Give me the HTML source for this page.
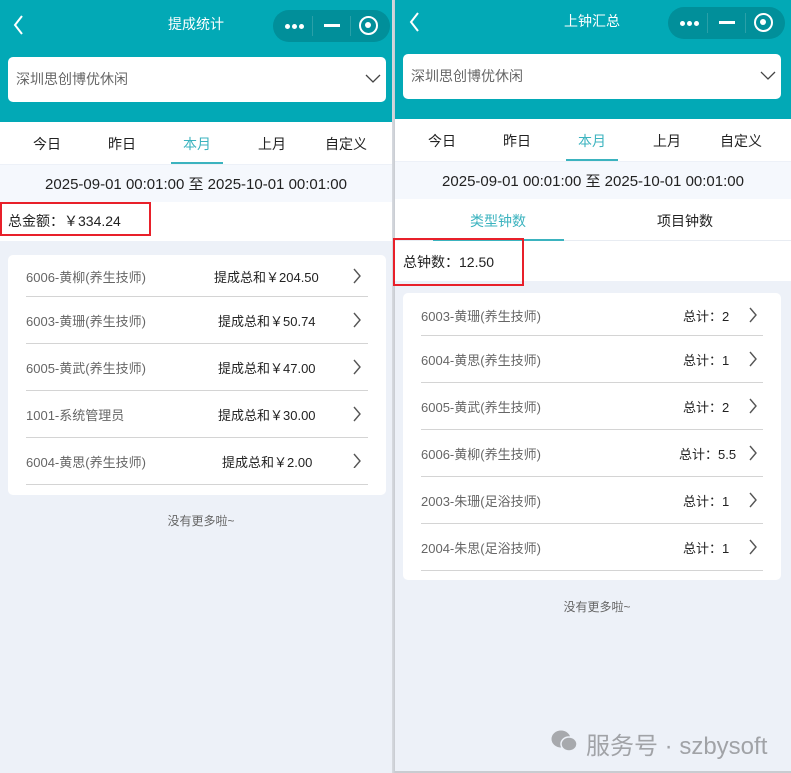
<!DOCTYPE html>
<html><head><meta charset="utf-8"><style>
*{margin:0;padding:0;box-sizing:border-box}
body{width:791px;height:773px;position:relative;overflow:hidden;background:#edf1f8;font-family:"Liberation Sans","Noto Sans CJK SC",sans-serif;color:#222}
.a{position:absolute}
.hd{background:#02a9b6}
.cap{position:absolute;width:117px;height:32px;border-radius:16px;background:#018f9a}
.cap .dots{position:absolute;left:12px;top:14px;width:20px;height:5px}
.cap .dots i{position:absolute;top:0;width:5px;height:5px;border-radius:50%;background:#fff}
.cap .sep{position:absolute;top:6px;width:1px;height:20px;background:#2aa0a8}
.cap .min{position:absolute;left:51px;top:14px;width:16px;height:3px;background:#fff}
.cap .rec{position:absolute;left:86px;top:6px;width:19px;height:19px;border:2.5px solid #fff;border-radius:50%}
.cap .rec:after{content:"";position:absolute;left:4px;top:4px;width:6px;height:6px;border-radius:50%;background:#fff}
.title{color:#fff;font-size:14px;text-align:center;width:200px}
.dd{background:#fff;border-radius:5px;height:45px;width:378px}
.dd span{position:absolute;left:8px;top:12px;font-size:14px;color:#666}
.tabs{background:#fff;height:42px}
.tab{position:absolute;top:12px;font-size:14px;width:60px;text-align:center}
.date{background:#f5f8fd;height:37px;font-size:15px;text-align:center;line-height:39px;color:#222}
.card{background:#fff;border-radius:5px}
.ln{position:absolute;height:1px;background:#d4d4d4}
.nm{position:absolute;font-size:13px;color:#666;margin-top:-1px}
.vl{position:absolute;font-size:13px;color:#222;margin-top:-1px}
.red{position:absolute;border:2px solid #e8202a}
.more{position:absolute;font-size:12px;color:#666;width:120px;text-align:center}
</style></head><body>

<!-- LEFT -->
<div class="a" style="left:0;top:0;width:392px;height:773px;background:#edf1f8"></div>
<div class="a hd" style="left:0;top:0;width:392px;height:122px"></div>
<svg class="a" style="left:12px;top:14px" width="14" height="22"><path d="M10 2 L3 11 L10 20" stroke="#fff" stroke-width="2" fill="none"/></svg>
<div class="a title" style="left:96px;top:14px">提成统计</div>
<div class="cap" style="left:273px;top:10px"><div class="dots"><i style="left:0"></i><i style="left:7px;top:0"></i><i style="left:14px"></i></div><div class="sep" style="left:39px"></div><div class="min"></div><div class="sep" style="left:77px"></div><div class="rec"></div></div>
<div class="a dd" style="left:8px;top:57px"><span>深圳思创博优休闲</span></div>
<svg class="a" style="left:365px;top:74px" width="16" height="10"><path d="M1 1 L8 8 L15 1" stroke="#444" stroke-width="1.3" fill="none"/></svg>
<div class="a tabs" style="left:0;top:122px;width:392px"></div>
<div class="tab" style="left:17px;top:134px">今日</div>
<div class="tab" style="left:92px;top:134px">昨日</div>
<div class="tab" style="left:167px;top:134px;color:#3bb3bf">本月</div>
<div class="tab" style="left:242px;top:134px">上月</div>
<div class="tab" style="left:316px;top:134px">自定义</div>
<div class="a" style="left:171px;top:162px;width:52px;height:2px;background:#3bb3bf"></div>
<div class="a date" style="left:0;top:165px;width:392px">2025-09-01 00:01:00 至 2025-10-01 00:01:00</div>
<div class="a" style="left:0;top:202px;width:392px;height:39px;background:#fff"></div>
<div class="a" style="left:8px;top:211px;font-size:14px">总金额：￥334.24</div>
<div class="red" style="left:0;top:202px;width:151px;height:34px"></div>
<div class="a card" style="left:8px;top:255px;width:378px;height:240px"></div>
<div class="ln" style="left:26px;top:296px;width:342px"></div>
<div class="ln" style="left:26px;top:343px;width:342px"></div>
<div class="ln" style="left:26px;top:390px;width:342px"></div>
<div class="ln" style="left:26px;top:437px;width:342px"></div>
<div class="ln" style="left:26px;top:484px;width:342px"></div>
<div class="nm" style="left:26px;top:268px">6006-黄柳(养生技师)</div>
<div class="nm" style="left:26px;top:312px">6003-黄珊(养生技师)</div>
<div class="nm" style="left:26px;top:359px">6005-黄武(养生技师)</div>
<div class="nm" style="left:26px;top:406px">1001-系统管理员</div>
<div class="nm" style="left:26px;top:453px">6004-黄思(养生技师)</div>
<div class="vl" style="left:214px;top:268px">提成总和￥204.50</div>
<div class="vl" style="left:218px;top:312px">提成总和￥50.74</div>
<div class="vl" style="left:218px;top:359px">提成总和￥47.00</div>
<div class="vl" style="left:218px;top:406px">提成总和￥30.00</div>
<div class="vl" style="left:222px;top:453px">提成总和￥2.00</div>
<svg class="a" style="left:352px;top:268px" width="10" height="200"><g stroke="#555" stroke-width="1.4" fill="none"><path d="M2 1 L8 8 L2 15"/><path d="M2 45 L8 52 L2 59"/><path d="M2 92 L8 99 L2 106"/><path d="M2 139 L8 146 L2 153"/><path d="M2 186 L8 193 L2 200"/></g></svg>
<div class="more" style="left:141px;top:512px">没有更多啦~</div>

<!-- divider -->
<div class="a" style="left:392px;top:0;width:3px;height:773px;background:linear-gradient(to right,#d8dbe0,#c8ccd2)"></div>

<!-- RIGHT -->
<div class="a hd" style="left:395px;top:0;width:396px;height:119px"></div>
<svg class="a" style="left:408px;top:11px" width="14" height="22"><path d="M10 2 L3 11 L10 20" stroke="#fff" stroke-width="2" fill="none"/></svg>
<div class="a title" style="left:492px;top:11px">上钟汇总</div>
<div class="cap" style="left:668px;top:7px"><div class="dots"><i style="left:0"></i><i style="left:7px"></i><i style="left:14px"></i></div><div class="sep" style="left:39px"></div><div class="min"></div><div class="sep" style="left:77px"></div><div class="rec"></div></div>
<div class="a dd" style="left:403px;top:54px"><span>深圳思创博优休闲</span></div>
<svg class="a" style="left:760px;top:71px" width="16" height="10"><path d="M1 1 L8 8 L15 1" stroke="#444" stroke-width="1.3" fill="none"/></svg>
<div class="a tabs" style="left:395px;top:119px;width:396px"></div>
<div class="tab" style="left:412px;top:131px">今日</div>
<div class="tab" style="left:487px;top:131px">昨日</div>
<div class="tab" style="left:562px;top:131px;color:#3bb3bf">本月</div>
<div class="tab" style="left:637px;top:131px">上月</div>
<div class="tab" style="left:711px;top:131px">自定义</div>
<div class="a" style="left:566px;top:159px;width:52px;height:2px;background:#3bb3bf"></div>
<div class="a date" style="left:395px;top:162px;width:396px">2025-09-01 00:01:00 至 2025-10-01 00:01:00</div>
<div class="a" style="left:395px;top:199px;width:396px;height:82px;background:#fff"></div>
<div class="a" style="left:470px;top:211px;font-size:14px;color:#3bb3bf">类型钟数</div>
<div class="a" style="left:657px;top:211px;font-size:14px">项目钟数</div>
<div class="a" style="left:395px;top:240px;width:396px;height:1px;background:#e8ecf2"></div>
<div class="a" style="left:433px;top:239px;width:131px;height:2px;background:#3bb3bf"></div>
<div class="a" style="left:403px;top:252px;font-size:14px">总钟数：12.50</div>
<div class="red" style="left:393px;top:238px;width:131px;height:48px"></div>
<div class="a card" style="left:403px;top:293px;width:378px;height:287px"></div>
<div class="ln" style="left:421px;top:335px;width:342px"></div>
<div class="ln" style="left:421px;top:382px;width:342px"></div>
<div class="ln" style="left:421px;top:429px;width:342px"></div>
<div class="ln" style="left:421px;top:476px;width:342px"></div>
<div class="ln" style="left:421px;top:523px;width:342px"></div>
<div class="ln" style="left:421px;top:570px;width:342px"></div>
<div class="nm" style="left:421px;top:307px">6003-黄珊(养生技师)</div>
<div class="nm" style="left:421px;top:351px">6004-黄思(养生技师)</div>
<div class="nm" style="left:421px;top:398px">6005-黄武(养生技师)</div>
<div class="nm" style="left:421px;top:445px">6006-黄柳(养生技师)</div>
<div class="nm" style="left:421px;top:492px">2003-朱珊(足浴技师)</div>
<div class="nm" style="left:421px;top:539px">2004-朱思(足浴技师)</div>
<div class="vl" style="left:683px;top:307px">总计：2</div>
<div class="vl" style="left:683px;top:351px">总计：1</div>
<div class="vl" style="left:683px;top:398px">总计：2</div>
<div class="vl" style="left:679px;top:445px">总计：5.5</div>
<div class="vl" style="left:683px;top:492px">总计：1</div>
<div class="vl" style="left:683px;top:539px">总计：1</div>
<svg class="a" style="left:748px;top:307px" width="10" height="250"><g stroke="#555" stroke-width="1.4" fill="none"><path d="M2 1 L8 8 L2 15"/><path d="M2 45 L8 52 L2 59"/><path d="M2 92 L8 99 L2 106"/><path d="M2 139 L8 146 L2 153"/><path d="M2 186 L8 193 L2 200"/><path d="M2 233 L8 240 L2 247"/></g></svg>
<div class="more" style="left:537px;top:598px">没有更多啦~</div>

<!-- watermark -->
<svg class="a" style="left:551px;top:729px" width="28" height="24"><ellipse cx="10" cy="10" rx="9.5" ry="8.5" fill="#a7a9ad"/><ellipse cx="18" cy="15" rx="8" ry="7" fill="#a7a9ad" stroke="#edf1f8" stroke-width="1.5"/></svg>
<div class="a" style="left:586px;top:726px;font-size:24px;color:#a1a3a7">服务号 · szbysoft</div>
<div class="a" style="left:395px;top:771px;width:396px;height:2px;background:#c9ccd1"></div>
</body></html>
